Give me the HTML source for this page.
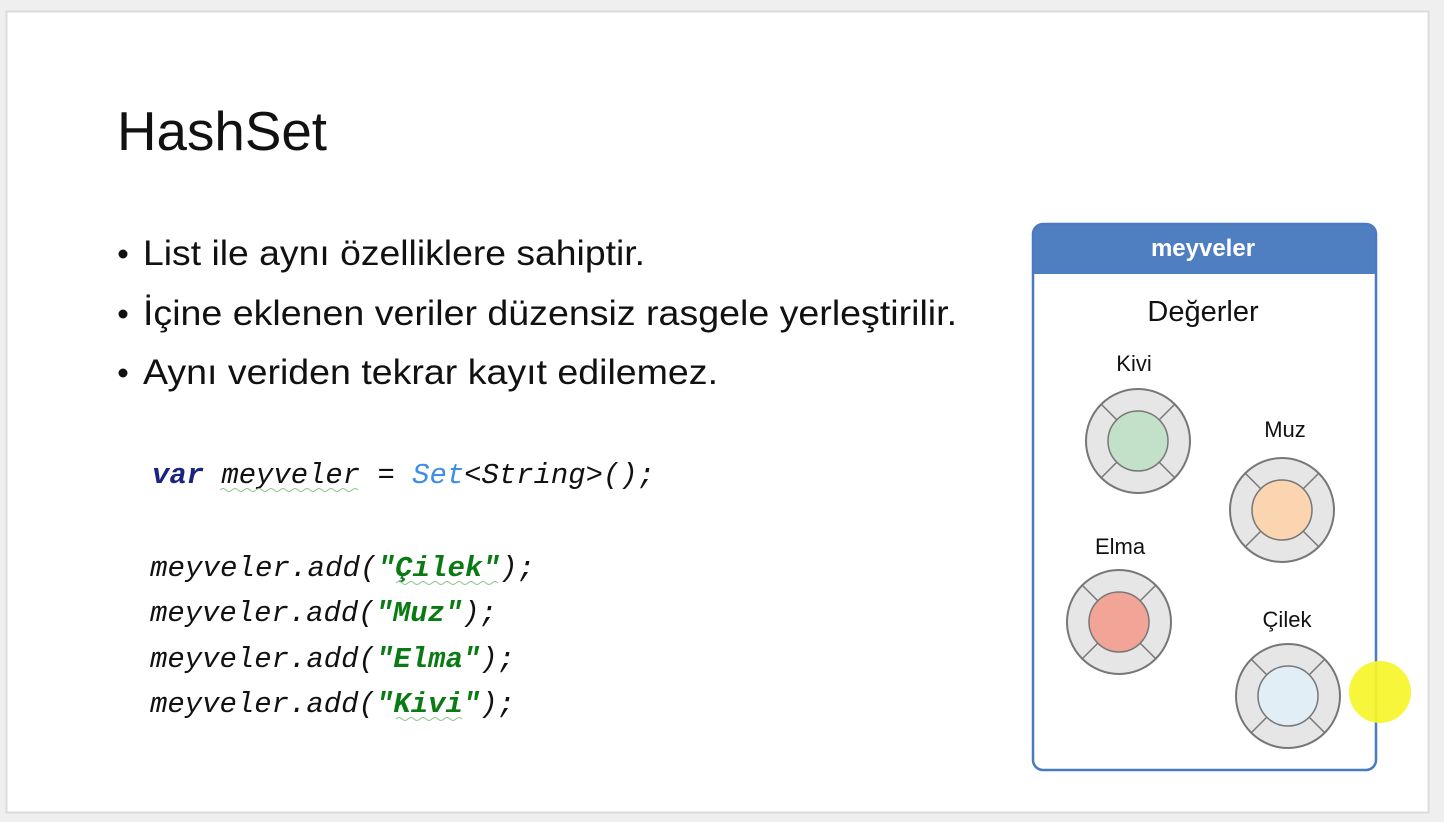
<!DOCTYPE html>
<html><head><meta charset="utf-8"><style>
html,body{margin:0;padding:0;background:#efefef;width:1444px;height:822px;overflow:hidden}
svg{display:block}
</style></head><body>
<svg width="1444" height="822" viewBox="0 0 1444 822" xmlns="http://www.w3.org/2000/svg">
<rect x="0" y="0" width="1444" height="822" fill="#efefef"/>
<rect x="6.5" y="11.5" width="1422" height="801" fill="#ffffff" stroke="#dcdcdc" stroke-width="2"/>
<text x="117" y="150" font-family="Liberation Sans, sans-serif" font-size="55" fill="#111" textLength="210" lengthAdjust="spacingAndGlyphs">HashSet</text>
<g font-family="Liberation Sans, sans-serif" font-size="35" fill="#111">
<circle cx="123" cy="254" r="4.5"/><circle cx="123" cy="314" r="4.5"/><circle cx="123" cy="373" r="4.5"/>
<text x="143" y="265" textLength="502" lengthAdjust="spacingAndGlyphs">List ile aynı özelliklere sahiptir.</text>
<text x="143" y="325" textLength="814" lengthAdjust="spacingAndGlyphs">İçine eklenen veriler düzensiz rasgele yerleştirilir.</text>
<text x="143" y="384" textLength="575" lengthAdjust="spacingAndGlyphs">Aynı veriden tekrar kayıt edilemez.</text>
</g>
<g font-family="Liberation Mono, DejaVu Sans Mono, monospace" font-size="29" font-style="italic" fill="#111">
<text x="152" y="483" textLength="503" lengthAdjust="spacingAndGlyphs"><tspan fill="#1a237e" font-weight="bold">var</tspan> meyveler = <tspan fill="#3d8ee6">Set</tspan>&lt;String&gt;();</text>
<text x="150" y="576" textLength="385" lengthAdjust="spacingAndGlyphs">meyveler.add(<tspan fill="#0a7a14" font-weight="bold">"Çilek"</tspan>);</text>
<text x="150" y="621" textLength="347" lengthAdjust="spacingAndGlyphs">meyveler.add(<tspan fill="#0a7a14" font-weight="bold">"Muz"</tspan>);</text>
<text x="150" y="667" textLength="365" lengthAdjust="spacingAndGlyphs">meyveler.add(<tspan fill="#0a7a14" font-weight="bold">"Elma"</tspan>);</text>
<text x="150" y="712" textLength="365" lengthAdjust="spacingAndGlyphs">meyveler.add(<tspan fill="#0a7a14" font-weight="bold">"Kivi"</tspan>);</text>
</g>
<g stroke="#8fc48f" stroke-width="1" fill="none">
<path d="M220 490 q3 -3 6 0 t6 0 t6 0 t6 0 t6 0 t6 0 t6 0 t6 0 t6 0 t6 0 t6 0 t6 0 t6 0 t6 0 t6 0 t6 0 t6 0 t6 0 t6 0 t6 0 t6 0 t6 0 t6 0"/>
<path d="M396 583 q3 -3 6 0 t6 0 t6 0 t6 0 t6 0 t6 0 t6 0 t6 0 t6 0 t6 0 t6 0 t6 0 t6 0 t6 0 t6 0 t6 0 t6 0"/>
<path d="M396 719 q3 -3 6 0 t6 0 t6 0 t6 0 t6 0 t6 0 t6 0 t6 0 t6 0 t6 0 t6 0"/>
</g>
<path d="M1043 224 H1366 a10 10 0 0 1 10 10 V274 H1033 V234 a10 10 0 0 1 10 -10z" fill="#4f7fc1"/>
<rect x="1033" y="224" width="343" height="546" rx="10" fill="none" stroke="#4a7abf" stroke-width="2.5"/>
<g font-family="Liberation Sans, sans-serif" text-anchor="middle">
<text x="1203" y="256" font-size="24" font-weight="bold" fill="#fff">meyveler</text>
<text x="1203" y="321" font-size="29" fill="#111">Değerler</text>
<text x="1134" y="371" font-size="22" fill="#111">Kivi</text>
<text x="1285" y="437" font-size="22" fill="#111">Muz</text>
<text x="1120" y="554" font-size="22" fill="#111">Elma</text>
<text x="1287" y="627" font-size="22" fill="#111">Çilek</text>
</g>
<g stroke="#777" stroke-width="2">
<g transform="translate(1138,441)"><circle r="52" fill="#e6e6e6"/><path d="M21 -21 L37 -37 M-21 -21 L-37 -37 M21 21 L37 37 M-21 21 L-37 37" stroke-width="1.5"/><circle r="30" fill="#c3e0c8" stroke-width="1.5"/></g>
<g transform="translate(1282,510)"><circle r="52" fill="#e6e6e6"/><path d="M21 -21 L37 -37 M-21 -21 L-37 -37 M21 21 L37 37 M-21 21 L-37 37" stroke-width="1.5"/><circle r="30" fill="#fbd5b0" stroke-width="1.5"/></g>
<g transform="translate(1119,622)"><circle r="52" fill="#e6e6e6"/><path d="M21 -21 L37 -37 M-21 -21 L-37 -37 M21 21 L37 37 M-21 21 L-37 37" stroke-width="1.5"/><circle r="30" fill="#f2a596" stroke-width="1.5"/></g>
<g transform="translate(1288,696)"><circle r="52" fill="#e6e6e6"/><path d="M21 -21 L37 -37 M-21 -21 L-37 -37 M21 21 L37 37 M-21 21 L-37 37" stroke-width="1.5"/><circle r="30" fill="#e2eef5" stroke-width="1.5"/></g>
</g>
<circle cx="1380" cy="692" r="31" fill="#f7f52a" opacity="0.92"/>
</svg>
</body></html>
